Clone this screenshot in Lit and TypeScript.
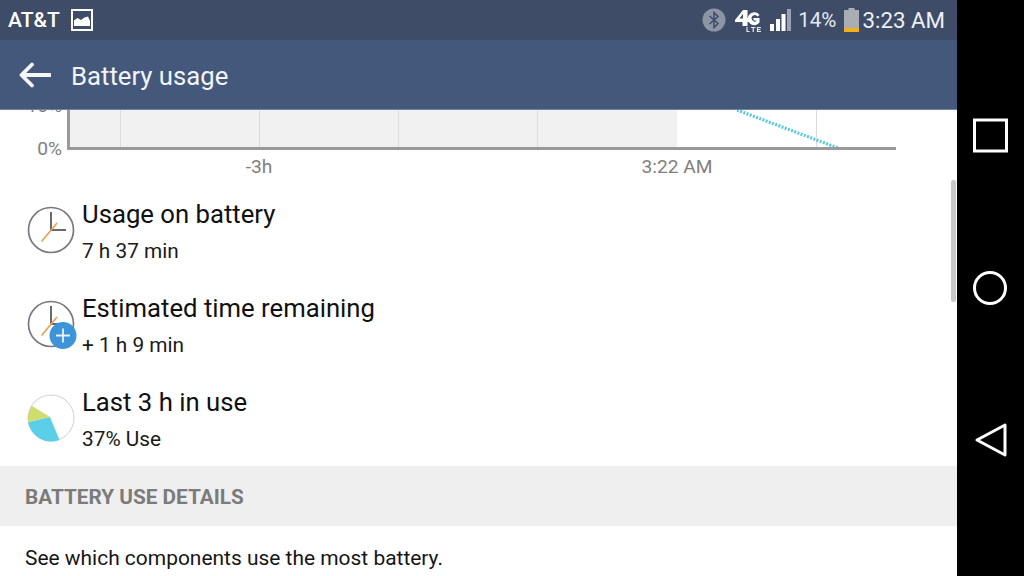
import { LitElement, html, css, svg } from "lit";
import { customElement } from "lit/decorators.js";

const clock = svg`
  <circle cx="24" cy="24" r="22.5" fill="#fff" stroke="#77797c" stroke-width="1.7"/>
  <path d="M24 24V6" stroke="#5e6366" stroke-width="1.9" fill="none"/>
  <path d="M24 24H39" stroke="#5e6366" stroke-width="1.9" fill="none"/>
  <path d="M14.5 35.5L30 17" stroke="#ee9c4c" stroke-width="1.6" fill="none"/>
`;

@customElement("app-root")
export class AppRoot extends LitElement {
  static styles = css`
    :host { display: flex; width: 1024px; height: 576px; overflow: hidden; font-family: Roboto, "Noto Sans", sans-serif; background: #000; }
    .main { width: 957px; height: 576px; display: flex; flex-direction: column; background: #fff; position: relative; overflow: hidden; }
    .status { height: 40px; flex: none; background: #3e4c68; display: flex; align-items: center; color: #fff; padding: 0 12px 0 8px; }
    .carrier { font-size: 21px; font-weight: 500; }
    .pic { margin-left: 11px; display: block; }
    .spacer { flex: 1; }
    .pct { font-size: 20.6px; color: #e6e9ef; margin-left: 6px; }
    .time { font-size: 22.3px; color: #eef0f4; margin-left: 3px; }
    .bt { display: block; }
    .net { display: block; margin-left: 9px; }
    .bars { display: block; margin-left: 9px; }
    .batt { display: block; margin-left: 8px; }
    .appbar { height: 70px; flex: none; background: #43587b; display: flex; align-items: center; color: #f2f4f7; padding-left: 19px; gap: 20px; box-shadow: inset 0 -1px 0 #6f82a0; }
    .appbar svg { display: block; }
    .appbar span { font-size: 25.7px; padding-top: 2px; }
    .chart { display: block; height: 73px; flex: none; }
    .chart text { font-family: Roboto, sans-serif; font-size: 19.2px; fill: #808080; }
    .row { height: 94px; flex: none; display: flex; align-items: center; padding-left: 27px; gap: 7px; box-sizing: border-box; }
    .rows { display: flex; flex-direction: column; }
    .ico { width: 48px; height: 48px; display: block; flex: none; overflow: visible; }
    .txt { padding-top: 2px; }
    .t { font-size: 25.7px; line-height: 30px; color: #111; }
    .s { font-size: 20.8px; line-height: 24px; color: #1a1a1a; margin-top: 10px; }
    .head { height: 60px; margin-top: 1px; flex: none; background: #efefef; display: flex; align-items: center; padding: 2px 0 0 25px; box-sizing: border-box; font-size: 20.75px; font-weight: 700; color: #7b7b7b; }
    .desc { padding: 20px 0 0 25px; font-size: 20.95px; line-height: 24px; color: #161616; white-space: nowrap; }
    .thumb { position: absolute; left: 951px; top: 180px; width: 5px; height: 122px; background: #c8c8c8; border-radius: 2px; }
    .nav { width: 67px; height: 576px; background: #000; display: flex; flex-direction: column; align-items: center; }
    .nav svg { display: block; }
  `;

  render() {
    return html`
      <div class="main">
        <div class="status">
          <span class="carrier">AT&amp;T</span>
          <svg class="pic" width="22" height="22" viewBox="0 0 22 22">
            <rect x="1" y="1" width="20" height="20" fill="none" stroke="#fff" stroke-width="2"/>
            <path d="M3 17V11.5L6.5 9L10 11L13.5 8.5L17 7.5L19 12V17Z" fill="#fff"/>
          </svg>
          <div class="spacer"></div>
          <svg class="bt" width="24" height="24" viewBox="0 0 24 24">
            <circle cx="12" cy="12" r="11.5" fill="#8d95a5"/>
            <path d="M7.5 8L16 15.5L12 19.5V4.5L16 8.5L7.5 16" fill="none" stroke="#3e4c68" stroke-width="1.5"/>
          </svg>
          <svg class="net" width="26" height="24" viewBox="0 0 26 24">
            <path d="M0 12L8 2H12.5V10H14V14H12.5V18H7.5V14H0ZM4.5 10.5H8V6Z" fill="#fff" fill-rule="evenodd"/>
            <path d="M24.5 7A6.5 6.5 0 1 0 24.5 14.5V10H18.5V12.5H21.5V13A3.2 3.2 0 1 1 22.5 8.5Z" fill="#fff"/>
            <path d="M12 19V23.5H14.5M16 19.5H20.5M18.2 19.5V24M26 19.5H22.5V23.5H26M22.5 21.5H25.5" fill="none" stroke="#e6e9ef" stroke-width="1.2"/>
          </svg>
          <svg class="bars" width="22" height="23" viewBox="0 0 22 23">
            <rect x="0" y="15" width="4" height="7" fill="#fff"/>
            <rect x="6" y="10" width="4" height="12" fill="#fff"/>
            <rect x="11.5" y="5" width="4" height="17" fill="#fff"/>
            <rect x="17" y="0" width="4" height="22" fill="#9aa2b2"/>
          </svg>
          <span class="pct">14%</span>
          <svg class="batt" width="15" height="24" viewBox="0 0 15 24">
            <rect x="4.5" y="0" width="6" height="2" fill="#a9adb4"/>
            <rect x="0" y="2" width="15" height="22" fill="#a9adb4"/>
            <rect x="0" y="20" width="15" height="4" fill="#f2b01f"/>
          </svg>
          <span class="time">3:23 AM</span>
        </div>
        <div class="appbar">
          <svg width="32" height="26" viewBox="0 0 32 26">
            <path d="M31 13H3M13 2.5L2.5 13L13 23.5" fill="none" stroke="#f4f6f8" stroke-width="3.8" stroke-linecap="round" stroke-linejoin="round"/>
          </svg>
          <span>Battery usage</span>
        </div>
        <svg class="chart" width="957" height="73" viewBox="0 110 957 73">
          <rect x="70" y="110" width="607" height="38" fill="#f1f1f1"/>
          ${[120, 259, 398, 537, 816].map((x) => svg`<line x1=${x + 0.5} y1="110" x2=${x + 0.5} y2="148" stroke="#dcdcdc"/>`)}
          <line x1="737" y1="110" x2="838" y2="148" stroke="#5cc8dc" stroke-width="3.2" stroke-dasharray="2 1.4"/>
          <path d="M68.5 110V148.5H896" fill="none" stroke="#999" stroke-width="3"/>
          <text x="62" y="155" text-anchor="end">0%</text>
          <text x="62" y="112" text-anchor="end">10%</text>
          <text x="259" y="173" text-anchor="middle">-3h</text>
          <text x="677" y="173" text-anchor="middle">3:22 AM</text>
        </svg>
        <div class="rows">
          <div class="row">
            <svg class="ico" viewBox="0 0 48 48">${clock}</svg>
            <div class="txt"><div class="t">Usage on battery</div><div class="s">7 h 37 min</div></div>
          </div>
          <div class="row">
            <svg class="ico" viewBox="0 0 48 48">
              ${clock}
              <circle cx="36" cy="35.5" r="13.5" fill="#3d94d8"/>
              <path d="M36 28.5V42.5M29 35.5H43" stroke="#e8f3fb" stroke-width="1.8"/>
            </svg>
            <div class="txt"><div class="t">Estimated time remaining</div><div class="s">+ 1 h 9 min</div></div>
          </div>
          <div class="row">
            <svg class="ico" viewBox="0 0 48 48">
              <circle cx="24" cy="24" r="23" fill="#fff" stroke="#cfcfcf" stroke-width="1"/>
              <path d="M23 23L1 28A23.5 23.5 0 0 0 32.5 46Z" fill="#5ccfe8"/>
              <path d="M23 23L5 12A23.5 23.5 0 0 0 1 28Z" fill="#cfdc6e"/>
            </svg>
            <div class="txt"><div class="t">Last 3 h in use</div><div class="s">37% Use</div></div>
          </div>
        </div>
        <div class="head">BATTERY USE DETAILS</div>
        <div class="desc">See which components use the most battery.</div>
        <div class="thumb"></div>
      </div>
      <div class="nav">
        <svg width="67" height="576" viewBox="0 0 67 576">
          <rect x="17.5" y="120" width="32" height="31" fill="none" stroke="#fff" stroke-width="3"/>
          <circle cx="33" cy="288" r="15.5" fill="none" stroke="#fff" stroke-width="3"/>
          <path d="M48 425V455L20 440Z" fill="none" stroke="#fff" stroke-width="3" stroke-linejoin="round"/>
        </svg>
      </div>
    `;
  }
}
